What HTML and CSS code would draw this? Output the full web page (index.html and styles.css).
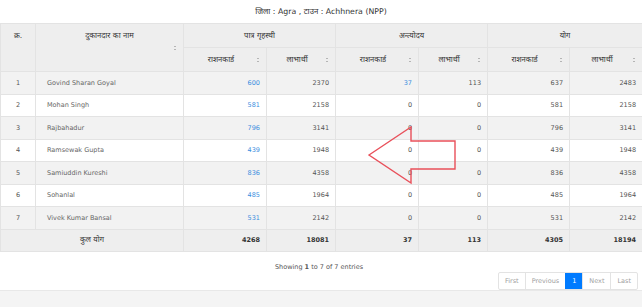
FILE: index.html
```html
<!DOCTYPE html>
<html lang="hi">
<head>
    <meta charset="UTF-8">
    <meta name="viewport" content="width=device-width, initial-scale=1.0">
    <title>दुकानवार रिपोर्ट</title>
<link rel="stylesheet" href="styles.css">
</head>
<body>

    <div class="report">
        <div class="report-title">जिला : Agra , टाउन : Achhnera (NPP)</div>

        <table class="grid">
            <colgroup>
                <col class="c-sn"><col class="c-name">
                <col class="c-card"><col class="c-ben">
                <col class="c-card"><col class="c-ben">
                <col class="c-card2"><col class="c-ben2">
            </colgroup>
            <thead>
                <tr>
                    <th rowspan="2" class="top">क्र.</th>
                    <th rowspan="2" class="top sortable">दुकानदार का नाम<span class="sort"></span></th>
                    <th colspan="2">पात्र गृहस्थी</th>
                    <th colspan="2">अन्त्योदय</th>
                    <th colspan="2">योग</th>
                </tr>
                <tr class="sub">
                    <th class="sortable">राशनकार्ड<span class="sort"></span></th>
                    <th class="sortable">लाभार्थी<span class="sort"></span></th>
                    <th class="sortable">राशनकार्ड<span class="sort"></span></th>
                    <th class="sortable">लाभार्थी<span class="sort"></span></th>
                    <th class="sortable">राशनकार्ड<span class="sort"></span></th>
                    <th class="sortable">लाभार्थी<span class="sort"></span></th>
                </tr>
            </thead>
            <tbody>
                <tr>
                    <td class="sn">1</td><td class="name">Govind Sharan Goyal</td>
                    <td><a href="#">600</a></td><td>2370</td>
                    <td><a href="#">37</a></td><td>113</td>
                    <td>637</td><td>2483</td>
                </tr>
                <tr>
                    <td class="sn">2</td><td class="name">Mohan Singh</td>
                    <td><a href="#">581</a></td><td>2158</td>
                    <td>0</td><td>0</td>
                    <td>581</td><td>2158</td>
                </tr>
                <tr>
                    <td class="sn">3</td><td class="name">Rajbahadur</td>
                    <td><a href="#">796</a></td><td>3141</td>
                    <td>0</td><td>0</td>
                    <td>796</td><td>3141</td>
                </tr>
                <tr>
                    <td class="sn">4</td><td class="name">Ramsewak Gupta</td>
                    <td><a href="#">439</a></td><td>1948</td>
                    <td>0</td><td>0</td>
                    <td>439</td><td>1948</td>
                </tr>
                <tr>
                    <td class="sn">5</td><td class="name">Samiuddin Kureshi</td>
                    <td><a href="#">836</a></td><td>4358</td>
                    <td>0</td><td>0</td>
                    <td>836</td><td>4358</td>
                </tr>
                <tr>
                    <td class="sn">6</td><td class="name">Sohanlal</td>
                    <td><a href="#">485</a></td><td>1964</td>
                    <td>0</td><td>0</td>
                    <td>485</td><td>1964</td>
                </tr>
                <tr>
                    <td class="sn">7</td><td class="name">Vivek Kumar Bansal</td>
                    <td><a href="#">531</a></td><td>2142</td>
                    <td>0</td><td>0</td>
                    <td>531</td><td>2142</td>
                </tr>
            </tbody>
            <tfoot>
                <tr>
                    <td colspan="2" class="total-label">कुल योग</td>
                    <td>4268</td><td>18081</td>
                    <td>37</td><td>113</td>
                    <td>4305</td><td>18194</td>
                </tr>
            </tfoot>
        </table>

        <div class="table-foot">
            <div class="info">Showing <b>1</b> to 7 of 7 entries</div>
            <ul class="pager">
                <li>First</li>
                <li>Previous</li>
                <li class="active">1</li>
                <li>Next</li>
                <li>Last</li>
            </ul>
        </div>
        <div class="page-bottom"></div>

        <!-- red arrow drawn over the table -->
        <svg class="arrow" width="94" height="62" viewBox="0 0 94 62">
            <polygon points="4,31 46,3 46,17 90,17 90,45 46,45 46,59" fill="none" stroke="#e9505a" stroke-width="1.4" stroke-linejoin="miter"/>
        </svg>
    </div>

</body>
</html>
```

FILE: styles.css
```css
*{
    padding:0;
    margin:0;
    box-sizing:border-box;
}
body{
    font-family:"DejaVu Sans", "Noto Sans Devanagari", "Noto Sans", Verdana, sans-serif;
    font-size:6.5px;
    color:#555;
    background:#fff;
}
.report{
    position:relative;
    width:642px;
}
.report-title{
    height:23px;
    line-height:23px;
    text-align:center;
    font-size:7.8px;
    color:#333;
}
.grid{
    width:642px;
    table-layout:fixed;
    border-collapse:collapse;
}
.c-sn{ width:35px; }
.c-name{ width:148px; }
.c-card{ width:83px; }
.c-ben{ width:69px; }
.c-card2{ width:82px; }
.c-ben2{ width:73px; }

.grid th,
.grid td{
    border:1px solid #e3e3e3;
    line-height:10px;
    padding:5.75px 6px;
}
.grid th{
    background:#eeeeee;
    color:#333;
    font-weight:normal;
    font-size:7.6px;
    text-align:center;
    padding:6.5px 6px;
}
.grid th.top{
    vertical-align:top;
}
.grid th.sortable{
    position:relative;
}
.grid tr.sub th{
    padding-right:14px;
}
/* two faint dots standing for the up/down sort arrows */
.sort{
    position:absolute;
    right:7px;
    top:50%;
    width:2px;
    height:6px;
    margin-top:-3px;
    background:radial-gradient(circle, #b5b5b5 0.8px, transparent 1px) 0 0 / 2px 3px;
}
.grid td{
    text-align:right;
}
.grid td.sn{
    text-align:center;
}
.grid td.name{
    text-align:left;
    padding-left:11px;
    color:#666;
}
.grid tbody tr:nth-child(odd) td{
    background:#f2f2f2;
}
.grid a{
    color:#3b8ee0;
    text-decoration:none;
}
.grid tfoot td{
    background:#eeeeee;
    font-weight:bold;
    color:#333;
}
.grid td.total-label{
    text-align:center;
    font-weight:normal;
    font-size:7.6px;
}
.table-foot{
    height:38px;
    padding:0 4px 0 0;
    display:flex;
    flex-direction:column;
}
.info{
    text-align:center;
    padding-top:11px;
    line-height:8px;
}
.pager{
    list-style:none;
    display:flex;
    align-self:flex-end;
    margin-top:1px;
    border:1px solid #e3e3e3;
    border-radius:2px;
}
.pager li{
    height:16px;
    line-height:16px;
    padding:0 6px;
    color:#a0a0a0;
    border-left:1px solid #e3e3e3;
}
.pager li:first-child{
    border-left:none;
}
.pager li.active{
    background:#007bff;
    color:#fff;
    border-left-color:#007bff;
}
.page-bottom{
    height:18px;
    background:#f4f4f4;
    border-top:1px solid #e8e8e8;
}
.arrow{
    position:absolute;
    left:365px;
    top:124px;
}
```
